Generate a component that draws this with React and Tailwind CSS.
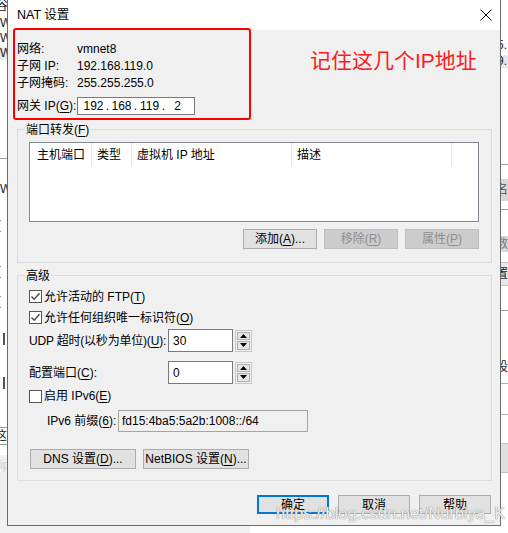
import React from 'react';

const FONT = "font-['Segoe_UI','Liberation_Sans','Noto_Sans_CJK_SC',sans-serif]";

function U({ children }) {
  return <span className="underline underline-offset-[2px] decoration-[1px]">{children}</span>;
}

function Button({ children, disabled, primary, className = '' }) {
  const tone = disabled
    ? 'bg-[#cccccc] border border-[#bfbfbf] text-[#8f8f8f]'
    : primary
    ? 'bg-[#e1e1e1] border-2 border-[#0078d7] text-black'
    : 'bg-[#e1e1e1] border border-[#adadad] text-black';
  return (
    <div className={`flex items-center justify-center shrink-0 leading-none whitespace-nowrap ${tone} ${className}`}>
      {children}
    </div>
  );
}

function Checkbox({ checked, children }) {
  return (
    <div className="flex items-center gap-[2px]">
      <div className="w-[13px] h-[13px] border border-[#555] bg-white flex items-center justify-center">
        {checked && (
          <svg width="11" height="11" viewBox="0 0 11 11">
            <polyline points="1.5,5.5 4.2,8.3 9.5,2.2" fill="none" stroke="#4a4a4a" strokeWidth="1.4" />
          </svg>
        )}
      </div>
      <span className="whitespace-nowrap">{children}</span>
    </div>
  );
}

function Spin({ value }) {
  return (
    <div className="flex items-center h-[23px]">
      <div className="w-[65px] h-[23px] border border-[#7a7a7a] bg-white pl-[4px] flex items-center">{value}</div>
      <div className="ml-[2px] w-[17px] h-[22px] border border-[#c8c8c8] flex flex-col gap-[1px] p-[1px]">
        <div className="flex-1 bg-[#e5e5e5] border border-[#b0b0b0] flex items-center justify-center">
          <svg width="7" height="4" viewBox="0 0 7 4"><polygon points="0,4 3.5,0 7,4" fill="#000" /></svg>
        </div>
        <div className="flex-1 bg-[#e5e5e5] border border-[#b0b0b0] flex items-center justify-center">
          <svg width="7" height="4" viewBox="0 0 7 4"><polygon points="0,0 7,0 3.5,4" fill="#000" /></svg>
        </div>
      </div>
    </div>
  );
}

function LeftStrip() {
  return (
    <div className="w-[7px] shrink-0 h-[533px] flex flex-col overflow-hidden bg-white text-[12px] text-[#222]">
      <div className="h-[12px] leading-[12px] -ml-[4px]">谷</div>
      <div className="h-[13px] leading-[13px] mt-[5px]">W</div>
      <div className="h-[17px] leading-[17px]">W</div>
      <div className="h-[13px] leading-[13px] bg-[#e8e8e8]">W</div>
      <div className="h-[98px]" />
      <div className="h-px bg-[#a0a0a0]" />
      <div className="h-[24px]" />
      <div className="h-[12px] leading-[12px]">W</div>
      <div className="h-[24px]" />
      <div className="h-[12px] leading-[12px] -ml-[3px] text-[#555]">(</div>
      <div className="h-[34px]" />
      <div className="h-[12px] leading-[12px] -ml-[3px] text-[#555]">(</div>
      <div className="h-[18px]" />
      <div className="h-[12px] leading-[12px] -ml-[3px] text-[#555]">(</div>
      <div className="h-[26px]" />
      <div className="h-[12px] w-[2px] ml-[3px] bg-[#555]" />
      <div className="h-[32px]" />
      <div className="h-[12px] w-[2px] ml-[3px] bg-[#555]" />
      <div className="h-[38px]" />
      <div className="h-[18px] border border-[#999] leading-[16px] -ml-[6px] w-[14px] text-[12px]">这</div>
      <div className="h-[10px]" />
      <div className="flex-1 bg-[#f0f0f0] text-[#cfcfcf] leading-[20px]">ip</div>
    </div>
  );
}

function RightStrip() {
  return (
    <div className="w-[7px] shrink-0 h-[533px] flex flex-col overflow-hidden bg-white text-[12px] text-[#222]">
      <div className="h-[38px]" />
      <div className="h-[14px] leading-[14px] -ml-[4px]">5.</div>
      <div className="h-[3px]" />
      <div className="h-[13px] leading-[13px] -ml-[4px] bg-[#e8e8e8]">9.</div>
      <div className="h-[96px]" />
      <div className="h-px bg-[#a0a0a0]" />
      <div className="h-[14px]" />
      <div className="h-[22px] bg-[#d8d8d8] leading-[22px] -ml-[5px] text-[#555]">名</div>
      <div className="h-px bg-[#a0a0a0] mt-[8px]" />
      <div className="h-[26px]" />
      <div className="h-[16px] bg-[#d8d8d8] leading-[16px] -ml-[5px] text-[#777]">数</div>
      <div className="h-[10px]" />
      <div className="h-[24px] bg-[#e8e8e8] border-y border-[#c0c0c0] leading-[22px] -ml-[5px]">置</div>
      <div className="h-[24px]" />
      <div className="h-px bg-[#a0a0a0]" />
      <div className="h-[44px]" />
      <div className="h-[24px] leading-[24px] -ml-[5px]">设</div>
      <div className="h-[4px]" />
      <div className="h-px bg-[#b0b0b0]" />
      <div className="h-[30px]" />
      <div className="h-px bg-[#b0b0b0]" />
      <div className="h-[28px]" />
      <div className="h-[30px] bg-[#e0e0e0] border-y border-[#c0c0c0]" />
      <div className="flex-1" />
    </div>
  );
}

export default function App() {
  return (
    <div className={`w-[508px] h-[533px] bg-white flex overflow-hidden relative text-[12px] text-black ${FONT}`}>
      <LeftStrip />

      <div className="w-[494px] shrink-0 flex flex-col">
        <div className="w-[494px] h-[526px] border-x border-b border-[#6b6b6b] bg-[#f0f0f0] flex flex-col relative">
          {/* title bar */}
          <div className="h-[30px] bg-white flex items-center justify-between pl-[9px] pr-[8px]">
            <span className="text-[12.5px] leading-none">NAT 设置</span>
            <svg width="12" height="12" viewBox="0 0 12 12">
              <path d="M0.5 0.5 L11.5 11.5 M11.5 0.5 L0.5 11.5" stroke="#000" strokeWidth="1" />
            </svg>
          </div>

          {/* network info */}
          <div className="flex items-start pl-[9px] pt-[10px]">
            <div className="flex flex-col w-[178px] shrink-0">
              <div className="h-[17px] flex items-center">
                <span className="w-[60px]">网络:</span>
                <span>vmnet8</span>
              </div>
              <div className="h-[17px] flex items-center">
                <span className="w-[60px]">子网 IP:</span>
                <span>192.168.119.0</span>
              </div>
              <div className="h-[17px] flex items-center">
                <span className="w-[60px]">子网掩码:</span>
                <span>255.255.255.0</span>
              </div>
              <div className="h-[18px] mt-[6px] flex items-center">
                <span className="w-[60px] whitespace-nowrap">网关 IP(<U>G</U>):</span>
                <div className="w-[118px] h-[18px] border border-[#7a7a7a] bg-white flex items-center pl-[4px]">
                  <span className="w-[23px] text-center">192</span>
                  <span className="w-[5px] text-center">.</span>
                  <span className="w-[23px] text-center">168</span>
                  <span className="w-[5px] text-center">.</span>
                  <span className="w-[23px] text-center">119</span>
                  <span className="w-[5px] text-center">.</span>
                  <span className="w-[23px] text-center">2</span>
                </div>
              </div>
            </div>
            <div className="ml-[115px] mt-[10px] text-[21px] leading-[22px] text-[#ff1a1a] whitespace-nowrap">记住这几个IP地址</div>
          </div>

          {/* port forwarding */}
          <div className="ml-[9px] mr-[8px] mt-[14px] border border-[#dcdcdc] pb-[13px]">
            <div className="-mt-[8px] ml-[7px] w-fit px-[1px] bg-[#f0f0f0] h-[16px] leading-[16px]">
              端口转发(<U>F</U>)
            </div>
            <div className="mt-[4px] ml-[11px] mr-[12px] h-[80px] border border-[#828790] bg-white">
              <div className="h-[24px] flex items-stretch">
                <div className="w-[62px] border-r border-[#e5e5e5] pl-[7px] flex items-center">主机端口</div>
                <div className="w-[40px] border-r border-[#e5e5e5] pl-[5px] flex items-center">类型</div>
                <div className="w-[160px] border-r border-[#e5e5e5] pl-[5px] flex items-center">虚拟机 IP 地址</div>
                <div className="w-[160px] border-r border-[#e5e5e5] pl-[5px] flex items-center">描述</div>
              </div>
            </div>
            <div className="mt-[7px] mr-[12px] flex justify-end gap-[7px]">
              <Button className="w-[74px] h-[20px]">添加(<U>A</U>)...</Button>
              <Button disabled className="w-[74px] h-[20px]">移除(<U>R</U>)</Button>
              <Button disabled className="w-[74px] h-[20px]">属性(<U>P</U>)</Button>
            </div>
          </div>

          {/* advanced */}
          <div className="ml-[9px] mr-[8px] mt-[12px] border border-[#dcdcdc] pb-[11px] pl-[11px]">
            <div className="-mt-[8px] -ml-[4px] w-fit px-[1px] bg-[#f0f0f0] h-[16px] leading-[16px]">高级</div>
            <div className="mt-[2px] h-[21px] flex items-center">
              <Checkbox checked>允许活动的 FTP(<U>T</U>)</Checkbox>
            </div>
            <div className="h-[21px] flex items-center">
              <Checkbox checked>允许任何组织唯一标识符(<U>O</U>)</Checkbox>
            </div>
            <div className="mt-[1px] flex items-center">
              <span className="w-[139px] shrink-0 whitespace-nowrap tracking-[-0.2px]">UDP 超时(以秒为单位)(<U>U</U>):</span>
              <Spin value="30" />
            </div>
            <div className="mt-[9px] flex items-center">
              <span className="w-[139px] shrink-0 whitespace-nowrap">配置端口(<U>C</U>):</span>
              <Spin value="0" />
            </div>
            <div className="mt-[2px] h-[20px] flex items-center">
              <Checkbox>启用 IPv6(<U>E</U>)</Checkbox>
            </div>
            <div className="mt-[4px] h-[22px] flex items-center pl-[18px]">
              <span className="w-[71px] shrink-0 whitespace-nowrap">IPv6 前缀(<U>6</U>):</span>
              <div className="w-[190px] h-[22px] border border-[#a5a5a5] bg-[#f0f0f0] flex items-center pl-[3px]">
                fd15:4ba5:5a2b:1008::/64
              </div>
            </div>
            <div className="mt-[17px] ml-[1px] flex gap-[7px]">
              <Button className="w-[106px] h-[20px]">DNS 设置(<U>D</U>)...</Button>
              <Button className="w-[106px] h-[20px]">NetBIOS 设置(<U>N</U>)...</Button>
            </div>
          </div>

          {/* dialog buttons */}
          <div className="mt-[14px] pr-[9px] flex justify-end gap-[9px]">
            <Button primary className="w-[72px] h-[19px]">确定</Button>
            <Button className="w-[72px] h-[19px]">取消</Button>
            <Button className="w-[72px] h-[19px]">帮助</Button>
          </div>

          {/* annotation */}
          <div className="absolute left-[5px] top-[28px] w-[238px] h-[92px] border-2 border-[#ff0000] rounded-[3px] pointer-events-none" />
        </div>
        <div className="flex-1 flex">
          <div className="w-[243px] bg-[#f0f0f0]" />
        </div>
      </div>

      <RightStrip />

      <div className="absolute left-[276px] top-[503px] text-[16.5px] leading-[20px] text-white/85 [text-shadow:0_0_1px_#8a8a8a,0_0_1px_#8a8a8a] pointer-events-none font-['Liberation_Sans',sans-serif]">
        https://blog.csdn.net/Nurbiya_K
      </div>
    </div>
  );
}
